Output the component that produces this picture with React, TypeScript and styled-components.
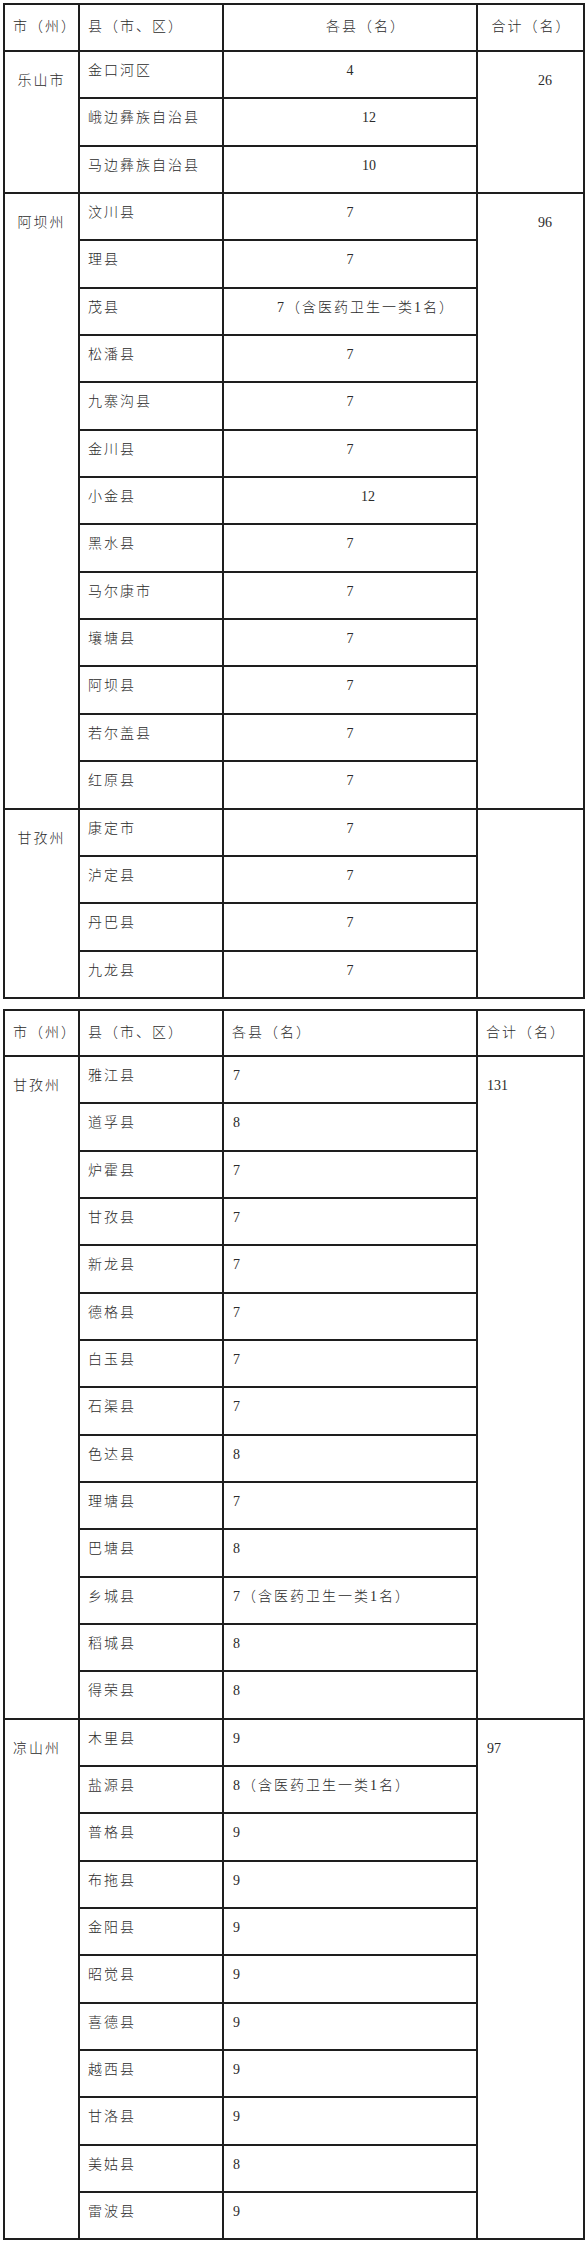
import React from "react";
import styled, { createGlobalStyle } from "styled-components";

type Row = { name: string; count: string; shift?: number };
type Group = { city: string; total: string; rows: Row[] };

const firstTable: Group[] = [
  {
    city: "乐山市",
    total: "26",
    rows: [
      { name: "金口河区", count: "4" },
      { name: "峨边彝族自治县", count: "12", shift: 19 },
      { name: "马边彝族自治县", count: "10", shift: 19 },
    ],
  },
  {
    city: "阿坝州",
    total: "96",
    rows: [
      { name: "汶川县", count: "7" },
      { name: "理县", count: "7" },
      { name: "茂县", count: "7（含医药卫生一类1名）", shift: 16 },
      { name: "松潘县", count: "7" },
      { name: "九寨沟县", count: "7" },
      { name: "金川县", count: "7" },
      { name: "小金县", count: "12", shift: 18 },
      { name: "黑水县", count: "7" },
      { name: "马尔康市", count: "7" },
      { name: "壤塘县", count: "7" },
      { name: "阿坝县", count: "7" },
      { name: "若尔盖县", count: "7" },
      { name: "红原县", count: "7" },
    ],
  },
  {
    city: "甘孜州",
    total: "",
    rows: [
      { name: "康定市", count: "7" },
      { name: "泸定县", count: "7" },
      { name: "丹巴县", count: "7" },
      { name: "九龙县", count: "7" },
    ],
  },
];

const secondTable: Group[] = [
  {
    city: "甘孜州",
    total: "131",
    rows: [
      { name: "雅江县", count: "7" },
      { name: "道孚县", count: "8" },
      { name: "炉霍县", count: "7" },
      { name: "甘孜县", count: "7" },
      { name: "新龙县", count: "7" },
      { name: "德格县", count: "7" },
      { name: "白玉县", count: "7" },
      { name: "石渠县", count: "7" },
      { name: "色达县", count: "8" },
      { name: "理塘县", count: "7" },
      { name: "巴塘县", count: "8" },
      { name: "乡城县", count: "7（含医药卫生一类1名）" },
      { name: "稻城县", count: "8" },
      { name: "得荣县", count: "8" },
    ],
  },
  {
    city: "凉山州",
    total: "97",
    rows: [
      { name: "木里县", count: "9" },
      { name: "盐源县", count: "8（含医药卫生一类1名）" },
      { name: "普格县", count: "9" },
      { name: "布拖县", count: "9" },
      { name: "金阳县", count: "9" },
      { name: "昭觉县", count: "9" },
      { name: "喜德县", count: "9" },
      { name: "越西县", count: "9" },
      { name: "甘洛县", count: "9" },
      { name: "美姑县", count: "8" },
      { name: "雷波县", count: "9" },
    ],
  },
];

const GlobalStyle = createGlobalStyle`
  body {
    margin: 0;
    background: #fff;
  }
`;

const Page = styled.div`
  padding: 3px 0 0 3px;
  width: 580px;
  font-family: "Liberation Serif", "Noto Sans CJK SC", serif;
  color: #2b2b2b;
`;

const Table = styled.table<{ $gap?: number }>`
  width: 580px;
  border-collapse: collapse;
  table-layout: fixed;
  margin-top: ${({ $gap }) => $gap ?? 0}px;
`;

const HeadRow = styled.tr<{ $h: number }>`
  height: ${({ $h }) => $h}px;
`;

const BodyRow = styled.tr`
  height: 47.35px;
`;

const Cell = styled.td<{ $align?: "left" | "center"; $pl?: number; $pt?: number }>`
  border: 2px solid #1e1e1e;
  vertical-align: top;
  text-align: ${({ $align }) => $align ?? "left"};
  padding: ${({ $pt }) => $pt ?? 9}px 2px 0 ${({ $pl }) => $pl ?? 8}px;
  font-size: 14px;
  font-weight: 300;
  line-height: 20px;
  letter-spacing: 2px;
  white-space: nowrap;
  overflow: hidden;
`;

const Num = styled.span`
  letter-spacing: 0;
  font-weight: 400;
`;

function Value({ text }: { text: string }) {
  return /^\d+$/.test(text) ? <Num>{text}</Num> : <>{text}</>;
}

function Colgroup() {
  return (
    <colgroup>
      <col style={{ width: 75 }} />
      <col style={{ width: 144 }} />
      <col style={{ width: 254 }} />
      <col style={{ width: 107 }} />
    </colgroup>
  );
}

function FirstTable() {
  return (
    <Table>
      <Colgroup />
      <tbody>
        <HeadRow $h={47}>
          <Cell $pt={12}>市（州）</Cell>
          <Cell $pt={12}>县（市、区）</Cell>
          <Cell $pt={12} $align="center" $pl={34}>各县（名）</Cell>
          <Cell $pt={12} $align="center" $pl={4}>合计（名）</Cell>
        </HeadRow>
        {firstTable.map((g) =>
          g.rows.map((r, i) => (
            <BodyRow key={g.city + r.name}>
              {i === 0 && (
                <Cell rowSpan={g.rows.length} $align="center" $pt={19} $pl={2}>
                  {g.city}
                </Cell>
              )}
              <Cell>{r.name}</Cell>
              <Cell $align="center" $pl={(r.shift ?? 0) * 2 + 2}>
                <Value text={r.count} />
              </Cell>
              {i === 0 && (
                <Cell rowSpan={g.rows.length} $pt={19} $pl={60}>
                  <Value text={g.total} />
                </Cell>
              )}
            </BodyRow>
          ))
        )}
      </tbody>
    </Table>
  );
}

function SecondTable() {
  return (
    <Table $gap={10}>
      <Colgroup />
      <tbody>
        <HeadRow $h={46}>
          <Cell $pt={12}>市（州）</Cell>
          <Cell $pt={12}>县（市、区）</Cell>
          <Cell $pt={12}>各县（名）</Cell>
          <Cell $pt={12}>合计（名）</Cell>
        </HeadRow>
        {secondTable.map((g) =>
          g.rows.map((r, i) => (
            <BodyRow key={g.city + r.name}>
              {i === 0 && (
                <Cell rowSpan={g.rows.length} $pt={19}>
                  {g.city}
                </Cell>
              )}
              <Cell>{r.name}</Cell>
              <Cell $pl={9}>
                <Value text={r.count} />
              </Cell>
              {i === 0 && (
                <Cell rowSpan={g.rows.length} $pt={19} $pl={9}>
                  <Value text={g.total} />
                </Cell>
              )}
            </BodyRow>
          ))
        )}
      </tbody>
    </Table>
  );
}

export default function App() {
  return (
    <>
      <GlobalStyle />
      <Page>
        <FirstTable />
        <SecondTable />
      </Page>
    </>
  );
}
